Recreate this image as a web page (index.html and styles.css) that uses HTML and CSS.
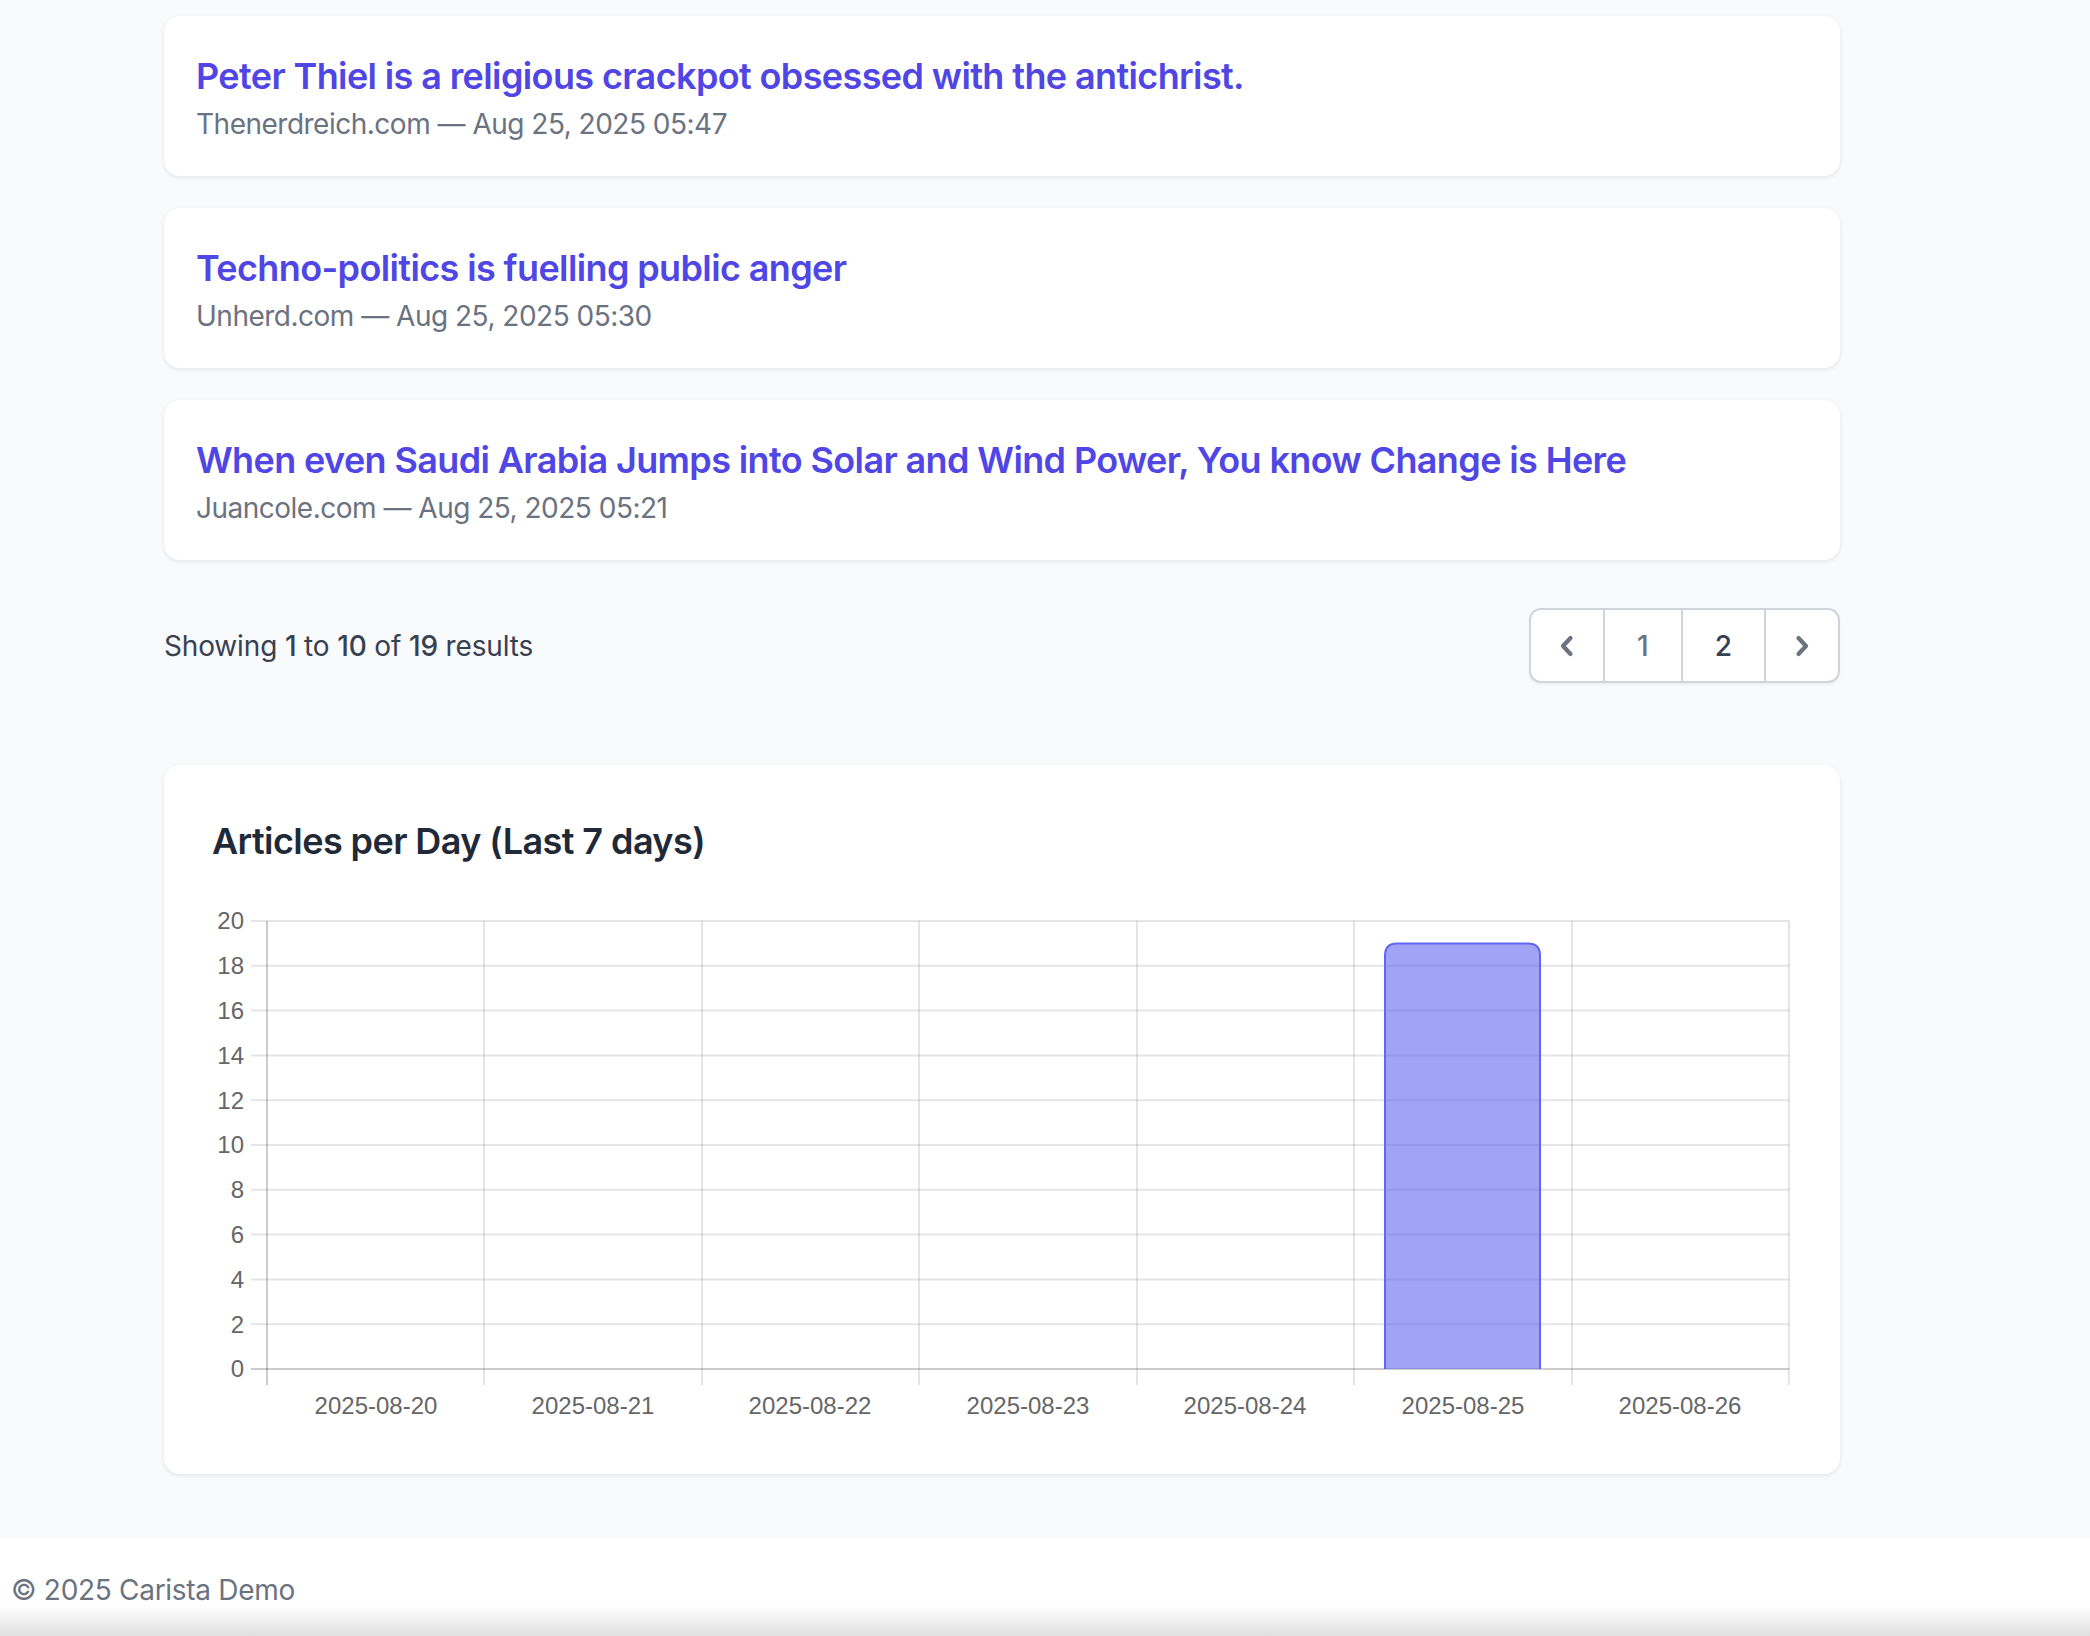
FILE: index.html
```html
<!DOCTYPE html>
<html lang="en">
<head>
<meta charset="utf-8">
<title>Carista Demo</title>
<link rel="stylesheet" href="styles.css">
</head>
<body>
<main class="main">
  <div class="list">
    <article class="card">
      <a class="card-title" href="#">Peter Thiel is a religious crackpot obsessed with the antichrist.</a>
      <div class="card-meta">Thenerdreich.com — Aug 25, 2025 05:47</div>
    </article>
    <article class="card">
      <a class="card-title" href="#">Techno-politics is fuelling public anger</a>
      <div class="card-meta">Unherd.com — Aug 25, 2025 05:30</div>
    </article>
    <article class="card">
      <a class="card-title" href="#">When even Saudi Arabia Jumps into Solar and Wind Power, You know Change is Here</a>
      <div class="card-meta">Juancole.com — Aug 25, 2025 05:21</div>
    </article>
  </div>

  <div class="pager-row">
    <p class="showing">Showing <span class="num">1</span> to <span class="num">10</span> of <span class="num">19</span> results</p>
    <nav class="pager">
      <a class="pg pg-icon" href="#" aria-label="Previous">
        <svg viewBox="0 0 40 40" width="40" height="40"><polyline points="23.5,12 16,20 23.5,28" fill="none" stroke="currentColor" stroke-width="4.2" stroke-linecap="round" stroke-linejoin="round"/></svg>
      </a>
      <a class="pg pg-num" href="#">1</a>
      <a class="pg pg-num pg-dark" href="#">2</a>
      <a class="pg pg-icon" href="#" aria-label="Next">
        <svg viewBox="0 0 40 40" width="40" height="40"><polyline points="16.5,12 24,20 16.5,28" fill="none" stroke="currentColor" stroke-width="4.2" stroke-linecap="round" stroke-linejoin="round"/></svg>
      </a>
    </nav>
  </div>

  <section class="chart-card">
    <h2 class="chart-title">Articles per Day (Last 7 days)</h2>
    <svg class="chart" width="1580" height="541" viewBox="0 0 1580 541">
      <g class="grid">
        <line x1="39" y1="36" x2="1577" y2="36"/>
        <line x1="39" y1="80.8" x2="1577" y2="80.8"/>
        <line x1="39" y1="125.6" x2="1577" y2="125.6"/>
        <line x1="39" y1="170.4" x2="1577" y2="170.4"/>
        <line x1="39" y1="215.2" x2="1577" y2="215.2"/>
        <line x1="39" y1="260" x2="1577" y2="260"/>
        <line x1="39" y1="304.8" x2="1577" y2="304.8"/>
        <line x1="39" y1="349.6" x2="1577" y2="349.6"/>
        <line x1="39" y1="394.4" x2="1577" y2="394.4"/>
        <line x1="39" y1="439.2" x2="1577" y2="439.2"/>
        <line x1="272" y1="36" x2="272" y2="500"/>
        <line x1="490" y1="36" x2="490" y2="500"/>
        <line x1="707" y1="36" x2="707" y2="500"/>
        <line x1="925" y1="36" x2="925" y2="500"/>
        <line x1="1142" y1="36" x2="1142" y2="500"/>
        <line x1="1360" y1="36" x2="1360" y2="500"/>
        <line x1="1577" y1="36" x2="1577" y2="500"/>
      </g>
      <g class="axis">
        <line x1="39" y1="484" x2="1577" y2="484"/>
        <line x1="55" y1="36" x2="55" y2="500"/>
      </g>
      <path class="bar-fill" d="M1173 484 V70.5 Q1173 58.5 1185 58.5 H1316 Q1328 58.5 1328 70.5 V484 Z"/>
      <path class="bar-stroke" d="M1173 484 V70.5 Q1173 58.5 1185 58.5 H1316 Q1328 58.5 1328 70.5 V484"/>
      <g class="ylab">
        <text x="32" y="44.4">20</text>
        <text x="32" y="89.2">18</text>
        <text x="32" y="134">16</text>
        <text x="32" y="178.8">14</text>
        <text x="32" y="223.6">12</text>
        <text x="32" y="268.4">10</text>
        <text x="32" y="313.2">8</text>
        <text x="32" y="358">6</text>
        <text x="32" y="402.8">4</text>
        <text x="32" y="447.6">2</text>
        <text x="32" y="492.4">0</text>
      </g>
      <g class="xlab">
        <text x="164" y="529">2025-08-20</text>
        <text x="381" y="529">2025-08-21</text>
        <text x="598" y="529">2025-08-22</text>
        <text x="816" y="529">2025-08-23</text>
        <text x="1033" y="529">2025-08-24</text>
        <text x="1251" y="529">2025-08-25</text>
        <text x="1468" y="529">2025-08-26</text>
      </g>
    </svg>
  </section>
</main>
<footer class="footer">© 2025 Carista Demo</footer>
</body>
</html>
```

FILE: styles.css
```css
* { box-sizing: border-box; }
html, body { margin: 0; padding: 0; }
body {
  background: #f9fafb;
  font-family: Inter, "Noto Sans", "Liberation Sans", sans-serif;
  color: #374151;
}
.main {
  width: 1676px;
  margin-left: 164px;
  padding-top: 16px;
}
.list {
  display: flex;
  flex-direction: column;
  gap: 32px;
}
.card {
  background: #fff;
  border-radius: 16px;
  padding: 32px;
  box-shadow: 0 2px 4px rgba(0,0,0,0.05), 0 1px 6px rgba(0,0,0,0.04);
}
.card-title {
  display: block;
  font-size: 36px;
  line-height: 56px;
  font-weight: 600;
  letter-spacing: -0.62px;
  color: #4f46e5;
  text-decoration: none;
}
.card-meta {
  font-size: 28px;
  line-height: 40px;
  letter-spacing: -0.5px;
  color: #6b7280;
}
.pager-row {
  margin-top: 48px;
  display: flex;
  align-items: center;
  justify-content: space-between;
}
.showing {
  margin: 0;
  font-size: 28px;
  line-height: 40px;
  letter-spacing: -0.15px;
  color: #374151;
}
.num { font-weight: 500; }
.pager {
  display: flex;
  background: #fff;
  border: 2px solid #d1d5db;
  border-radius: 12px;
  box-shadow: 0 2px 3px rgba(0,0,0,0.05);
  overflow: hidden;
}
.pg {
  display: flex;
  align-items: center;
  justify-content: center;
  height: 71px;
  text-decoration: none;
  font-size: 28px;
  line-height: 40px;
  font-weight: 500;
  color: #6b7280;
}
.pg + .pg { border-left: 2px solid #d1d5db; }
.pg-icon { padding: 0 16px; color: #6b7280; }
.pg-icon svg { display: block; }
.pg-num { padding: 0 32px; }
.pg-dark { color: #374151; }
.chart-card {
  margin-top: 82px;
  background: #fff;
  border-radius: 16px;
  padding: 48px;
  box-shadow: 0 2px 4px rgba(0,0,0,0.05), 0 1px 6px rgba(0,0,0,0.04);
}
.chart-title {
  margin: 0 0 16px;
  font-size: 36px;
  line-height: 56px;
  font-weight: 600;
  letter-spacing: -0.58px;
  color: #1f2937;
}
.chart { display: block; }
.grid line { stroke: rgba(0,0,0,0.1); stroke-width: 2; }
.axis line { stroke: rgba(0,0,0,0.2); stroke-width: 2; }
.bar-fill { fill: rgba(99,102,241,0.6); }
.bar-stroke { fill: none; stroke: #6366f1; stroke-width: 2; }
.ylab text, .xlab text {
  font-family: "Liberation Sans", Arial, sans-serif;
  font-size: 24px;
  fill: #666;
}
.ylab text { text-anchor: end; }
.xlab text { text-anchor: middle; }
.footer {
  margin-top: 64px;
  height: 99px;
  padding: 32px 11px 27px;
  font-size: 28px;
  line-height: 40px;
  letter-spacing: -0.3px;
  color: #6b7280;
  background: linear-gradient(to bottom, #fff 0, #fff 68px, #dedede 99px);
}
```
